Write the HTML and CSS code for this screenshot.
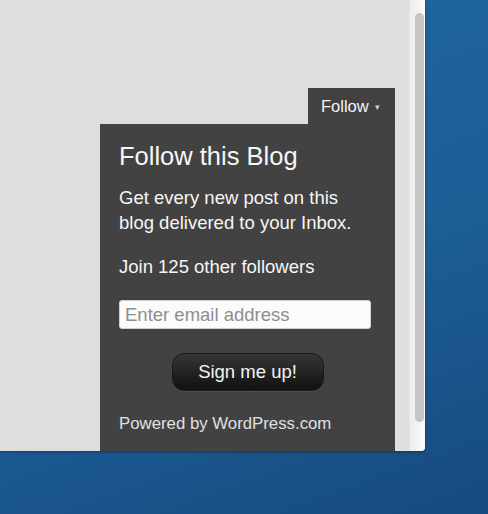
FILE: index.html
```html
<!DOCTYPE html>
<html lang="en">
<head>
    <meta charset="UTF-8">
    <meta name="viewport" content="width=device-width, initial-scale=1.0">
    <title>Follow this Blog</title>
    <link rel="stylesheet" href="styles.css">
</head>
<body>
    <div class="window">
        <div class="page">
            <div class="follow-tab">Follow <span class="caret">&#9662;</span></div>
            <div class="follow-panel">
                <h2>Follow this Blog</h2>
                <p>Get every new post on this blog delivered to your Inbox.</p>
                <p>Join 125 other followers</p>
                <input type="text" class="email" placeholder="Enter email address">
                <div class="actions">
                    <button>Sign me up!</button>
                </div>
                <div class="powered">Powered by WordPress.com</div>
            </div>
        </div>
        <div class="scrollbar">
            <div class="thumb"></div>
        </div>
    </div>
</body>
</html>
```

FILE: styles.css
```css
html, body {
    margin: 0;
    height: 100%;
}
body {
    font-family: "Liberation Sans", Arial, sans-serif;
    background: linear-gradient(160deg, #1f68a4 0%, #1c5e96 55%, #164a7e 100%);
    overflow: hidden;
}
.window {
    display: flex;
    width: 425px;
    height: 451px;
    background: #dedede;
    border-bottom-right-radius: 4px;
    overflow: hidden;
    box-shadow: 0 1px 3px rgba(0, 0, 0, 0.35);
}
.page {
    flex: 1;
    display: flex;
    flex-direction: column;
    align-items: flex-end;
    padding: 88px 14px 0 0;
}
.follow-tab {
    width: 87px;
    height: 36px;
    box-sizing: border-box;
    padding-left: 13px;
    background: #414141;
    color: #f4f4f4;
    font-size: 16.5px;
    line-height: 36px;
}
.caret {
    font-size: 9px;
    color: #cfcfcf;
    vertical-align: 2px;
    margin-left: 2px;
}
.follow-panel {
    flex: 1;
    width: 295px;
    box-sizing: border-box;
    padding: 17px 19px 0;
    background: #424242;
    color: #f6f6f6;
}
.follow-panel h2 {
    margin: 0 0 14px;
    font-size: 25.5px;
    font-weight: normal;
    line-height: 30px;
}
.follow-panel p {
    margin: 0 0 19px;
    font-size: 18.5px;
    line-height: 25px;
}
.email {
    display: block;
    width: 252px;
    height: 29px;
    box-sizing: border-box;
    margin-top: 21px;
    padding: 2px 5px;
    border: 1px solid #d0d0d0;
    border-radius: 3px;
    background: #fbfbfb;
    font-family: inherit;
    font-size: 18.5px;
    color: #333;
}
.follow-panel p + p {
    margin-bottom: 0;
}
.email::placeholder {
    color: #8e8e8e;
}
.actions {
    display: flex;
    justify-content: center;
    margin-top: 24px;
}
button {
    width: 152px;
    height: 38px;
    border: 1px solid #1a1a1a;
    border-radius: 12px;
    background: linear-gradient(#363636, #111);
    color: #f4f4f4;
    font-family: inherit;
    font-size: 18.5px;
    box-shadow: 0 1px 1px rgba(255, 255, 255, 0.08);
    cursor: pointer;
}
.powered {
    margin-top: 23px;
    font-size: 16.8px;
    color: #e0e0e0;
}
.scrollbar {
    width: 16px;
    padding: 13px 2px 0 5px;
    box-sizing: border-box;
    background: linear-gradient(90deg, #ececec, #fbfbfb);
    border-left: 1px solid #e6e6e6;
}
.thumb {
    width: 9px;
    height: 409px;
    border-radius: 5px;
    background: #c5c5c5;
}
```
